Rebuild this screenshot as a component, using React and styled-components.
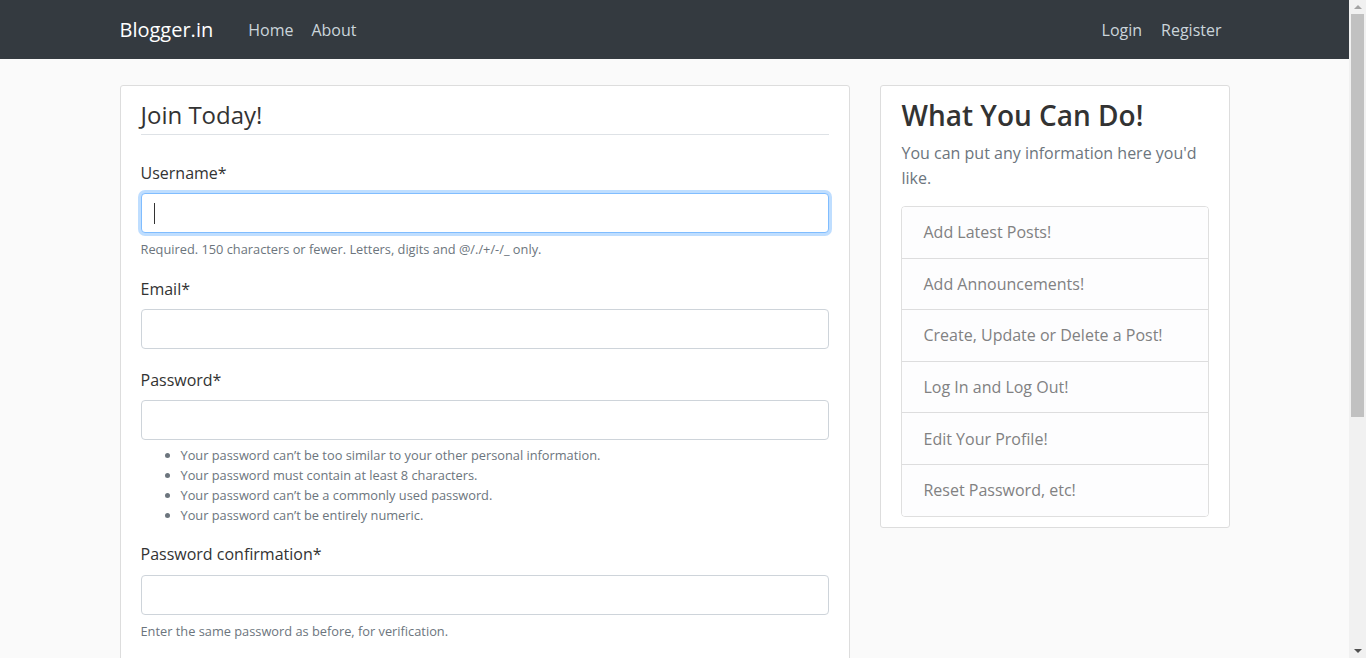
import React from 'react';
import styled, { createGlobalStyle, css } from 'styled-components';

const GlobalStyle = createGlobalStyle`
	* { box-sizing: border-box; }
	html, body {
		margin: 0;
		padding: 0;
	}
	body {
		background: #fafafa;
		color: #333333;
		font-family: "Open Sans", "Noto Sans", sans-serif;
		font-size: 16px;
		line-height: 1.5;
		overflow: hidden;
	}
`

const helpItems = [
	"Your password can’t be too similar to your other personal information.",
	"Your password must contain at least 8 characters.",
	"Your password can’t be a commonly used password.",
	"Your password can’t be entirely numeric.",
];

const sideItems = [
	'Add Latest Posts!',
	'Add Announcements!',
	'Create, Update or Delete a Post!',
	'Log In and Log Out!',
	'Edit Your Profile!',
	'Reset Password, etc!',
];

const App = () => {
	return (
		<>
			<GlobalStyle />
			<Page>
				<Header>
					<NavInner>
						<Brand href="#">Blogger.in</Brand>
						<NavLinks>
							<NavLink href="#">Home</NavLink>
							<NavLink href="#">About</NavLink>
						</NavLinks>
						<NavLinks $right>
							<NavLink href="#">Login</NavLink>
							<NavLink href="#">Register</NavLink>
						</NavLinks>
					</NavInner>
				</Header>
				<Main>
					<Row>
						<div>
							<Section>
								<form>
									<Fieldset>
										<Legend>Join Today!</Legend>
										<FormGroup>
											<Label>Username*</Label>
											<InputWrap>
												<Input type="text" $focused />
												<Caret />
											</InputWrap>
											<HelpText>Required. 150 characters or fewer. Letters, digits and @/./+/-/_ only.</HelpText>
										</FormGroup>
										<FormGroup>
											<Label>Email*</Label>
											<Input type="email" />
										</FormGroup>
										<FormGroup>
											<Label>Password*</Label>
											<Input type="password" />
											<HelpList>
												{helpItems.map((item) => (
													<li key={item}>{item}</li>
												))}
											</HelpList>
										</FormGroup>
										<FormGroup>
											<Label $loose>Password confirmation*</Label>
											<Input type="password" />
											<HelpText>Enter the same password as before, for verification.</HelpText>
										</FormGroup>
									</Fieldset>
								</form>
							</Section>
						</div>
						<div>
							<Section>
								<SideTitle>What You Can Do!</SideTitle>
								<SideText>You can put any information here you'd like.</SideText>
								<ListGroup>
									{sideItems.map((item) => (
										<ListItem key={item}>{item}</ListItem>
									))}
								</ListGroup>
							</Section>
						</div>
					</Row>
				</Main>
			</Page>
			<Scrollbar>
				<ScrollArrow $up />
				<ScrollThumb />
				<ScrollArrow />
			</Scrollbar>
		</>
	)
}
export default App;

const Page = styled.div`
	margin-right: 17px;
`
const Header = styled.header`
	background: #343a40;
	height: 59px;
`
const NavInner = styled.nav`
	max-width: 1140px;
	height: 100%;
	margin: 0 auto;
	padding: 0 15px;
	display: flex;
	align-items: center;
`
const Brand = styled.a`
	color: #ffffff;
	font-size: 20px;
	text-decoration: none;
	margin-right: 27px;
	line-height: 30px;
`
const NavLinks = styled.div`
	display: flex;
	margin-left: ${(p) => (p.$right ? 'auto' : '0')};
	gap: ${(p) => (p.$right ? '3px' : '2px')};
`
const NavLink = styled.a`
	color: #cbd5db;
	text-decoration: none;
	font-size: 16px;
	padding: 8px;
`
const Main = styled.main`
	max-width: 1140px;
	margin: 0 auto;
	padding: 26px 15px 0;
`
const Row = styled.div`
	display: grid;
	grid-template-columns: calc((100% + 30px) * 2 / 3 - 29.5px) 1fr;
	column-gap: 30.5px;
	align-items: start;
	& > div { min-width: 0; }
`
const Section = styled.div`
	background: #ffffff;
	border: 1px solid #dddddd;
	border-radius: 3px;
	padding: 10px 20px;
	margin-bottom: 20px;
`
const Fieldset = styled.fieldset`
	border: 0;
	margin: 0;
	padding: 0;
	min-width: 0;
`
const Legend = styled.legend`
	display: block;
	width: 100%;
	padding: 0;
	font-size: 24px;
	line-height: 38px;
	color: #333333;
	border-bottom: 1px solid #dee2e6;
	margin-bottom: 26px;
`
const FormGroup = styled.div`
	margin-bottom: 19px;
`
const Label = styled.label`
	display: block;
	font-size: 16px;
	line-height: 24px;
	margin-bottom: ${(p) => (p.$loose ? '9px' : '8px')};
	color: #333333;
`
const focusRing = css`
	border-color: #80bdff;
	box-shadow: 0 0 0 3px rgba(0, 123, 255, 0.25);
	outline: 0;
`
const InputWrap = styled.div`
	position: relative;
`
const Input = styled.input`
	display: block;
	width: 100%;
	height: 40px;
	padding: 6px 12px;
	font-family: inherit;
	font-size: 16px;
	color: #495057;
	background: #ffffff;
	border: 1px solid #ced4da;
	border-radius: 4px;
	&:focus { ${focusRing} }
	${(p) => p.$focused && focusRing}
`
const Caret = styled.span`
	position: absolute;
	left: 13px;
	top: 10px;
	width: 1px;
	height: 21px;
	background: #333333;
`
const HelpText = styled.small`
	display: block;
	margin-top: 8px;
	font-size: 12.8px;
	line-height: 17px;
	color: #6c757d;
`
const HelpList = styled.ul`
	margin: 5px 0 -2px;
	padding-left: 40px;
	font-size: 12.8px;
	line-height: 20px;
	color: #6c757d;
`
const SideTitle = styled.h3`
	margin: 2px 0 9px;
	font-size: 28px;
	font-weight: 600;
	line-height: 34px;
	color: #333333;
`
const SideText = styled.p`
	margin: 0 0 15px;
	color: #6c757d;
	font-size: 16px;
	line-height: 25px;
`
const ListGroup = styled.ul`
	list-style: none;
	margin: 0;
	padding: 0;
	border: 1px solid rgba(0, 0, 0, 0.125);
	border-radius: 4px;
	overflow: hidden;
`
const ListItem = styled.li`
	background: #fdfdfe;
	color: #818182;
	font-size: 16px;
	line-height: 24px;
	padding: 13.3px 21px;
	& + & {
		border-top: 1px solid rgba(0, 0, 0, 0.125);
	}
`
const Scrollbar = styled.div`
	position: fixed;
	top: 0;
	right: 0;
	bottom: 0;
	width: 17px;
	background: #f1f1f1;
	display: flex;
	flex-direction: column;
	align-items: center;
`
const ScrollArrow = styled.div`
	height: 14px;
	width: 100%;
	display: flex;
	align-items: center;
	justify-content: center;
	margin-top: ${(p) => (p.$up ? '0' : 'auto')};
	&::after {
		content: '';
		border-left: 4px solid transparent;
		border-right: 4px solid transparent;
		${(p) => (p.$up ? 'border-bottom: 4px solid #a3a3a3;' : 'border-top: 4px solid #505050;')}
	}
`
const ScrollThumb = styled.div`
	width: 13px;
	height: 403px;
	background: #c1c1c1;
`
